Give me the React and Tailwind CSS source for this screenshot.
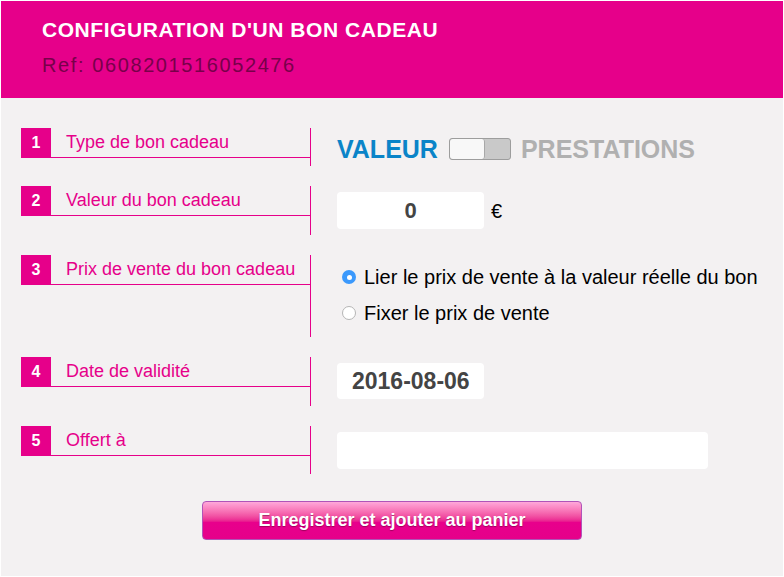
import React from 'react';

function Row({ n, label, height, children }) {
  return (
    <div className={`flex ${height}`}>
      <div className="w-[290px] shrink-0 border-r border-[#e6008a]">
        <div className="flex h-[30px] border-b border-[#e6008a]">
          <div className="w-[30px] bg-[#e6008a] text-white font-bold text-[16px] flex items-center justify-center">
            {n}
          </div>
          <div className="pl-[15px] flex items-center text-[18px] leading-none text-[#e6008a] pb-[2px]">
            {label}
          </div>
        </div>
      </div>
      <div className="flex-1 pl-[26px]">{children}</div>
    </div>
  );
}

function Radio({ checked, children }) {
  return (
    <label className="flex items-center h-[36px] text-[20px] text-black">
      {checked ? (
        <span className="ml-[5px] w-[14px] h-[14px] rounded-full bg-[#3b99fc] flex items-center justify-center">
          <span className="w-[5px] h-[5px] rounded-full bg-white"></span>
        </span>
      ) : (
        <span className="ml-[5px] w-[14px] h-[14px] rounded-full bg-white border border-[#b5b5b5]"></span>
      )}
      <span className="ml-[8px]">{children}</span>
    </label>
  );
}

export default function App() {
  return (
    <div className="w-[784px] h-[577px] border border-white bg-[#f3f1f2] font-['Liberation_Sans',Arial,sans-serif] overflow-hidden">
      {/* header */}
      <div className="h-[97px] bg-[#e6008a] pl-[41px] pt-[18px]">
        <h1 className="text-[21px] leading-none font-bold text-white tracking-[0.55px]">
          CONFIGURATION D'UN BON CADEAU
        </h1>
        <p className="mt-[15px] text-[20px] leading-none text-[#78004a] tracking-[1.6px]">
          Ref: 0608201516052476
        </p>
      </div>

      <div className="px-[20px] pt-[30px] flex flex-col gap-[20px]">
        <Row n="1" label="Type de bon cadeau" height="h-[38px]">
          <div className="flex items-center h-full pt-[4px]">
            <span className="text-[25px] leading-none font-bold text-[#0a84c8]">VALEUR</span>
            <div className="ml-[11px] w-[62px] h-[22px] rounded-[3px] border border-[#9d9d9d] bg-[#c9c9c9] flex overflow-hidden">
              <div className="w-[35px] h-full bg-[#f8f8f8] border-r border-[#a8a8a8] rounded-[3px]"></div>
            </div>
            <span className="ml-[10px] text-[25px] leading-none font-bold text-[#b0b0b0]">PRESTATIONS</span>
          </div>
        </Row>

        <Row n="2" label="Valeur du bon cadeau" height="h-[49px]">
          <div className="flex items-center pt-[6px]">
            <div className="w-[147px] h-[37px] bg-white rounded-[4px] flex items-center justify-center text-[22px] font-bold text-[#444]">
              0
            </div>
            <span className="ml-[7px] text-[20px] text-black">€</span>
          </div>
        </Row>

        <Row n="3" label="Prix de vente du bon cadeau" height="h-[82px]">
          <div className="pt-[4px]">
            <Radio checked>Lier le prix de vente à la valeur réelle du bon</Radio>
            <Radio>Fixer le prix de vente</Radio>
          </div>
        </Row>

        <Row n="4" label="Date de validité" height="h-[49px]">
          <div className="pt-[6px]">
            <div className="w-[147px] h-[36px] bg-white rounded-[4px] flex items-center pl-[15px] text-[23px] font-bold text-[#444]">
              2016-08-06
            </div>
          </div>
        </Row>

        <Row n="5" label="Offert à" height="h-[48px]">
          <div className="pt-[6px]">
            <div className="w-[371px] h-[37px] bg-white rounded-[4px]"></div>
          </div>
        </Row>
      </div>

      <div className="flex justify-center mt-[27px]">
        <button className="w-[380px] h-[39px] rounded-[4px] border border-[#b054b8] bg-gradient-to-b from-[#ffa8da] via-[#e8008c] via-55% to-[#e6008a] text-white font-bold text-[18px] [text-shadow:0_1px_1px_rgba(90,0,50,0.5)]">
          Enregistrer et ajouter au panier
        </button>
      </div>
    </div>
  );
}
